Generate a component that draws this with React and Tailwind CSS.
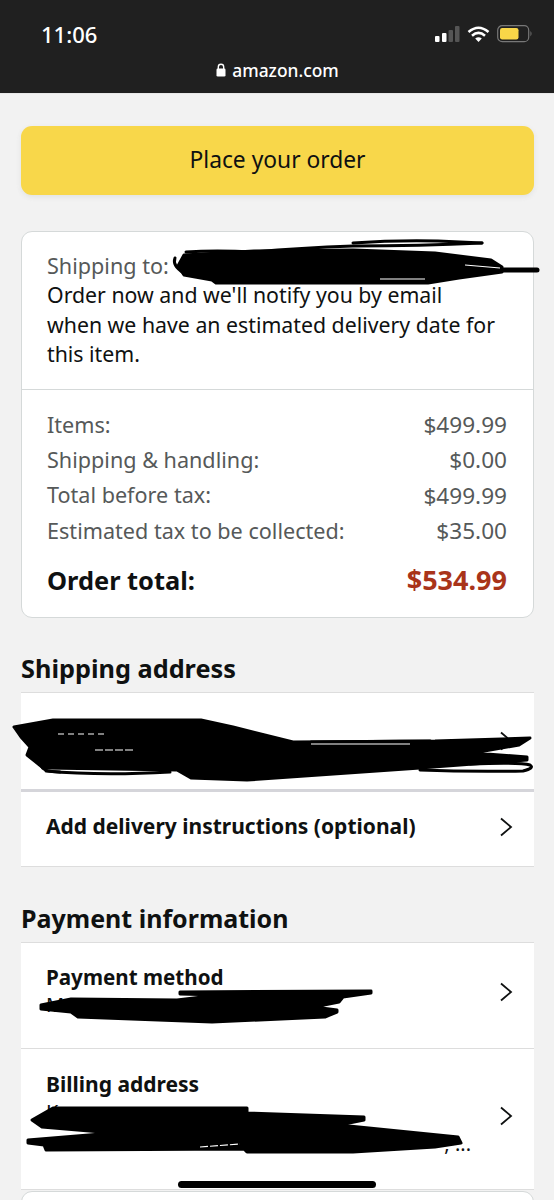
import React from "react";

const Chevron = () => (
  <svg width="14" height="20" viewBox="0 0 14 20" className="shrink-0">
    <polyline points="2,1.5 12,10 2,18.5" fill="none" stroke="#0f1111" strokeWidth="1.8" />
  </svg>
);

const Row = ({ label, value }) => (
  <div className="flex h-[35.4px] items-center justify-between">
    <span className="text-[21.6px]">{label}</span>
    <span className="text-[22.6px]">{value}</span>
  </div>
);

const Scribbles = () => (
  <svg width="554" height="1200" className="absolute inset-0 pointer-events-none">
    <g fill="#000" stroke="#000" strokeWidth="3" strokeLinejoin="round">
      <polygon points="184,255 254,251 353,250 435,253 491,260 502,267 502,272 459,278 428,283 216,283 212,280 184,275 178,266" />
      <polygon points="14,727 53,720 201,720 233,727 293,742 435,741 530,738 519,745 473,753 527,757 527,760 420,768 247,780 191,778 177,770 46,768 42,767 27,755 30,747 21,737" />
      <polygon points="180,992 371,991 371,993 343,997 339,1002 314,1007 337,1010 337,1012 325,1017 212,1022 78,1017 71,1012 41,1009 41,1005 71,999 177,1000 219,995 180,994" />
      <polygon points="32,1120 53,1108 247,1108 247,1113 364,1117 364,1120 339,1125 458,1137 461,1143 435,1147 353,1152 247,1152 244,1149 46,1150 44,1145 28,1143 28,1140 113,1133 42,1127" />
    </g>
    <g fill="none" stroke="#000" strokeWidth="3" strokeLinecap="round" strokeLinejoin="round">
      <path d="M482 243 Q420 246 353 246 Q300 248 254 252 Q215 250 186 252" />
      <path d="M353 243 Q395 240 438 241 L482 243" />
      <path d="M502 270 L537 270" strokeWidth="5" />
      <path d="M175 258 Q172 266 184 273" />
      <path d="M425 270 Q450 268 491 262" />
      <path d="M46 771 Q100 776 170 772" />
      <path d="M42 767 Q44 772 60 772" />
      <path d="M420 770 Q470 772 523 771 Q535 768 530 765 Q520 762 470 764" />
      <path d="M311 742 L430 741" />
      <path d="M311 746 L410 746" />
    </g>
    <g fill="none" stroke="#fff" strokeWidth="1.2">
      <path d="M311 744 L410 744" />
      <path d="M95 750 L134 750" strokeDasharray="8 2" />
      <path d="M58 734 L108 734" strokeDasharray="6 4" />
      <path d="M200 1147 L240 1144" strokeDasharray="8 2" />
      <path d="M380 279 L425 279" />
      <path d="M465 265 L500 268" />
    </g>
  </svg>
);

export default function App() {
  return (
    <div className="relative h-[1200px] w-[554px] overflow-hidden bg-[#f2f2f2] text-[#0f1111] font-['Noto_Sans',sans-serif]">
      <header className="h-[94px] border-b border-[#e8e8e8] bg-[#202020] text-white">
        <div className="flex h-[62px] items-start justify-between pl-[41px] pr-[21px] pt-[20px]">
          <span className="text-[22px] font-medium leading-[28px]">11:06</span>
          <div className="flex items-center gap-[7px] pt-[5px]">
            <svg width="25" height="17" viewBox="0 0 25 17">
              <rect x="0" y="10" width="4.5" height="6" rx="1" fill="#fff" />
              <rect x="7" y="7" width="4.5" height="9" rx="1" fill="#fff" />
              <rect x="13.5" y="4" width="4.5" height="12" rx="1" fill="#555" />
              <rect x="20" y="0" width="4.5" height="16" rx="1" fill="#555" />
            </svg>
            <svg width="23" height="17" viewBox="0 0 23 17">
              <path d="M1.5 6 Q11.5 -2.5 21.5 6" fill="none" stroke="#fff" strokeWidth="2.6" />
              <path d="M5 9.7 Q11.5 4 18 9.7" fill="none" stroke="#fff" strokeWidth="2.6" />
              <path d="M8.2 12.6 Q11.5 9.8 14.8 12.6 L11.5 16 Z" fill="#fff" />
            </svg>
            <svg width="36" height="18" viewBox="0 0 36 18">
              <rect x="0.7" y="0.7" width="31" height="16" rx="4.5" fill="none" stroke="#777" strokeWidth="1.2" />
              <rect x="3" y="3" width="18.5" height="11.5" rx="2.2" fill="#f8d648" />
              <path d="M33.5 6 Q35.5 8.7 33.5 11.5 Z" fill="#777" />
            </svg>
          </div>
        </div>
        <div className="flex h-[16px] items-center justify-center gap-[6px] pl-[1px]">
          <svg width="10" height="14" viewBox="0 0 10 14">
            <path d="M2.3 6 V4 a2.7 2.7 0 0 1 5.4 0 V6" fill="none" stroke="#fff" strokeWidth="1.4" />
            <rect x="0.5" y="5.5" width="9" height="8" rx="1.3" fill="#fff" />
          </svg>
          <span className="text-[17.4px] font-medium leading-[16px]">amazon.com</span>
        </div>
      </header>

      <main className="pl-[21px] pr-[20px] pt-[32px]">
        <button className="flex h-[69px] w-full items-center justify-center rounded-[11px] bg-[#f8d74a] text-[22.8px] shadow-[0_2px_5px_rgba(213,217,217,0.6)]">
          Place your order
        </button>

        <section className="mt-[36px] h-[387px] rounded-[11px] border border-[#d5d9d9] bg-white">
          <div className="h-[158px] border-b border-[#d5d9d9] pl-[25px] pr-[30px] pt-[19px] text-[21.3px] leading-[29.3px]">
            <div className="text-[21.6px] text-[#565959]">Shipping to:</div>
            <div>
              Order now and we'll notify you by email
              <br />
              when we have an estimated delivery date for
              <br />
              this item.
            </div>
          </div>
          <div className="pl-[25px] pr-[26px] pt-[17px] text-[#565959]">
            <Row label="Items:" value="$499.99" />
            <Row label="Shipping & handling:" value="$0.00" />
            <Row label="Total before tax:" value="$499.99" />
            <Row label="Estimated tax to be collected:" value="$35.00" />
            <div className="mt-[13px] flex items-center justify-between font-bold leading-[36px]">
              <span className="text-[25.4px] text-[#0f1111]">Order total:</span>
              <span className="text-[27px] text-[#a9341a]">$534.99</span>
            </div>
          </div>
        </section>

        <h2 className="mt-[33px] h-[41px] text-[25.3px] font-bold leading-[34px]">Shipping address</h2>
        <div className="border-y border-[#dddddd] bg-white">
          <div className="flex h-[96px] items-center justify-end pr-[21px]"><Chevron /></div>
          <div className="flex h-[77px] items-center justify-between border-t-[3px] border-[#d5d5da] pb-[5px] pl-[25px] pr-[21px]">
            <span className="text-[21px] font-bold">Add delivery instructions (optional)</span>
            <Chevron />
          </div>
        </div>

        <h2 className="mt-[34px] h-[41px] text-[25px] font-bold leading-[34px]">Payment information</h2>
        <div className="border-t border-[#dddddd] bg-white">
          <div className="flex h-[105px] items-center justify-between pb-[7px] pl-[25px] pr-[21px]">
            <div className="h-[58px] text-[20.6px] font-bold leading-[28px]">
              <div>Payment method</div>
              <div className="text-[20px] font-normal">M</div>
            </div>
            <Chevron />
          </div>
          <div className="flex h-[142px] items-center justify-between border-y border-[#dddddd] pb-[6px] pl-[25px] pr-[21px]">
            <div className="h-[92px] w-[425px] text-[21px] font-bold leading-[28px]">
              <div>Billing address</div>
              <div className="text-[20px] font-normal">K</div>
              <div className="text-right text-[20px] font-normal leading-[36px]">, ...</div>
            </div>
            <Chevron />
          </div>
        </div>
        <div className="mt-[1px] h-[40px] rounded-t-[11px] border border-[#d5d9d9] bg-white" />
      </main>

      <Scribbles />
      <div className="absolute bottom-[12px] left-[178px] h-[7px] w-[198px] rounded-full bg-black" />
    </div>
  );
}
